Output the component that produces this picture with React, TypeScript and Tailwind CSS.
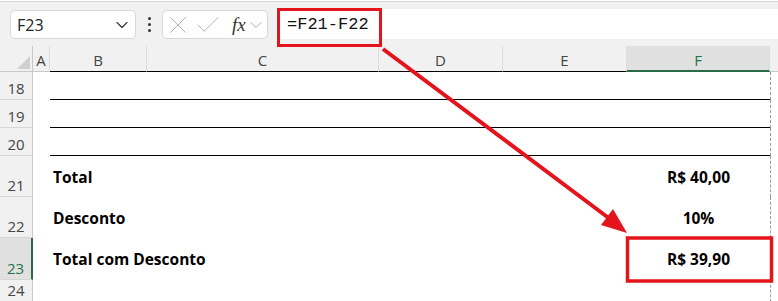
import React from 'react';
import { ChevronDown, X, Check } from 'lucide-react';

const cols = ['A', 'B', 'C', 'D', 'E', 'F'];

const rows = [
  { n: 18, h: 'h-[28px]', label: '', value: '', line: true },
  { n: 19, h: 'h-[28px]', label: '', value: '', line: true },
  { n: 20, h: 'h-[28px]', label: '', value: '', line: true },
  { n: 21, h: 'h-[41px]', label: 'Total', value: 'R$ 40,00', line: false },
  { n: 22, h: 'h-[41px]', label: 'Desconto', value: '10%', line: false },
  { n: 23, h: 'h-[42px]', label: 'Total com Desconto', value: 'R$ 39,90', line: false },
  { n: 24, h: 'h-[22px]', label: '', value: '', line: false },
];

const App = () => {
  return (
    <div className="relative w-[778px] h-[301px] overflow-hidden bg-white font-['Open_Sans',sans-serif]">
      {/* Barra de fórmulas */}
      <div className="h-[2px] bg-white border-b border-[#d6d6d6]" />
      <div className="h-[44px] bg-[#f1f1f1] flex items-start pt-[8px] pl-[10px]">
        <div className="w-[126px] h-[29px] bg-white border border-[#d8d8d8] rounded-[5px] flex items-center justify-between pl-[6px] pr-[3px]">
          <span className="text-[16px] text-[#222] leading-none">F23</span>
          <ChevronDown size={20} strokeWidth={1.3} className="text-[#333]" />
        </div>
        <div className="w-[26px] h-[29px] flex flex-col items-center justify-center gap-[3px]">
          <span className="w-[3px] h-[3px] rounded-full bg-[#333]" />
          <span className="w-[3px] h-[3px] rounded-full bg-[#333]" />
          <span className="w-[3px] h-[3px] rounded-full bg-[#333]" />
        </div>
        <div className="w-[106px] h-[29px] bg-white border border-[#d8d8d8] rounded-[5px] flex items-center">
          <X size={30} strokeWidth={0.8} className="text-[#b4b4b4] shrink-0" />
          <Check size={30} strokeWidth={0.8} className="text-[#b4b4b4] shrink-0" />
          <span className="ml-[9px] font-['Liberation_Serif',serif] italic text-[19px] text-[#333] leading-none">fx</span>
          <ChevronDown size={20} strokeWidth={1} className="text-[#9a9a9a] shrink-0" />
        </div>
        <div className="ml-[8px] flex-1 h-[30px] -mt-[1px] bg-white flex items-center pl-[11px]">
          <span className="font-['Liberation_Mono',monospace] text-[17px] text-[#111] leading-none">=F21-F22</span>
        </div>
      </div>

      {/* Planilha */}
      <div className="grid grid-cols-[33px_17px_97px_232px_124px_124px_143px_1fr]">
        {/* Cabeçalho das colunas */}
        <div className="relative h-[26px] bg-[#f1f1f1] border-r border-b border-[#c8c8c8]">
          <svg className="absolute right-[2px] bottom-[2px]" width="13" height="13" viewBox="0 0 13 13">
            <polygon points="13,0 13,13 0,13" fill="#cfcfcf" />
          </svg>
        </div>
        {cols.map(c => (
          <div
            key={c}
            className={`h-[26px] flex items-center justify-center pt-[4px] text-[15px] leading-none border-r border-[#dcdcdc] ${
              c === 'F'
                ? 'bg-[#e0e0e0] text-[#217346] border-b-2 border-b-[#2a6b45]'
                : c === 'A'
                ? 'bg-[#f1f1f1] text-[#444] border-b border-b-[#c8c8c8]'
                : 'bg-[#f1f1f1] text-[#444] border-b border-b-black'
            }`}
          >
            {c}
          </div>
        ))}
        <div className="h-[26px] bg-[#f1f1f1] border-b border-[#c8c8c8]" />

        {/* Linhas */}
        {rows.map(r => (
          <React.Fragment key={r.n}>
            <div
              className={`${r.h} flex items-end justify-center pb-[3px] text-[15px] leading-none border-b border-[#d6d6d6] ${
                r.n === 23
                  ? 'bg-[#e0e0e0] text-[#217346] border-r-2 border-r-[#2a6b45]'
                  : 'bg-[#f1f1f1] text-[#444] border-r border-r-[#c8c8c8]'
              }`}
            >
              {r.n}
            </div>
            <div className={r.h} />
            <div className={`${r.h} relative col-span-5 grid grid-cols-[97px_232px_124px_124px_143px] ${r.line ? 'border-b border-black' : ''}`}>
              <div className="col-span-2 flex items-center pl-[3px] pt-[2px] font-['Open_Sans',sans-serif] font-bold text-[15.5px] text-black whitespace-nowrap">
                {r.label}
              </div>
              <div />
              <div />
              <div className="flex items-center justify-center pt-[2px] font-['Open_Sans',sans-serif] font-bold text-[15.5px] text-black">
                {r.value}
              </div>
            </div>
            <div className={`${r.h} border-l border-dashed border-[#9a9a9a]`} />
          </React.Fragment>
        ))}
      </div>

      {/* Destaques */}
      <svg className="absolute inset-0 pointer-events-none" width="778" height="301" viewBox="0 0 778 301">
        <rect x="278.5" y="9.5" width="102" height="36" fill="none" stroke="#e3141b" strokeWidth="3" />
        <rect x="627.5" y="238" width="144" height="43" fill="none" stroke="#e3141b" strokeWidth="3.5" />
        <line x1="383" y1="49" x2="610" y2="219" stroke="#e3141b" strokeWidth="4" />
        <polygon points="627,233 601,225 613,209" fill="#e3141b" />
      </svg>
    </div>
  );
};

export default App;
